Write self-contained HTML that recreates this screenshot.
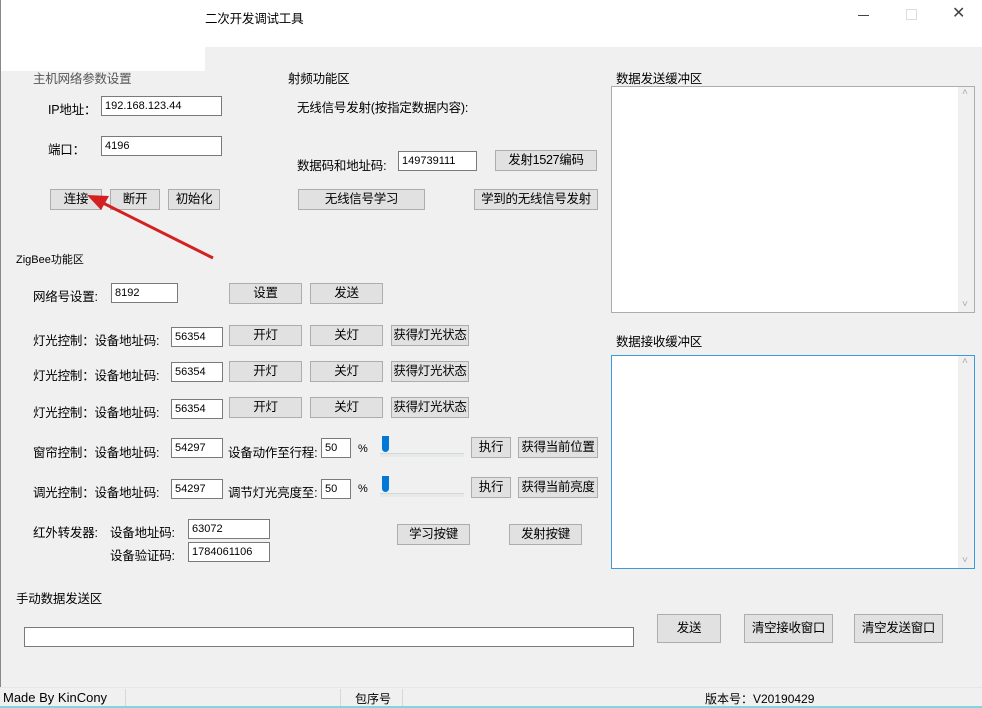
<!DOCTYPE html>
<html><head><meta charset="utf-8"><style>
*{box-sizing:border-box;margin:0;padding:0}
body{width:982px;height:708px;background:#f0f0f0;position:relative;overflow:hidden;font:12px "Liberation Sans","Noto Sans CJK SC",sans-serif;color:#000}
.a{position:absolute;white-space:nowrap}
.b{position:absolute;background:#e1e1e1;border:1px solid #adadad;text-align:center;font-size:12.5px;line-height:19px;height:21px;white-space:nowrap;overflow:hidden;letter-spacing:-0.3px}
.i{position:absolute;background:#fff;border:1px solid #7a7a7a;font-size:11px;padding-left:3px;line-height:18px;height:20px}
.t{font-size:12.5px;letter-spacing:-0.2px;margin-top:1px}
.ta{position:absolute;background:#fff;border:1px solid #abadb3}
.sb{position:absolute;right:0;top:0;bottom:0;width:16px;background:#f0f0f0}
.sb:before{content:"˄";position:absolute;top:0;left:4px;color:#aaa;font-size:10px}
.sb:after{content:"˅";position:absolute;bottom:2px;left:4px;color:#aaa;font-size:10px}
.sl{position:absolute;height:22px;width:84px}
.sl .tr{position:absolute;left:0;right:0;top:17px;height:4px;background:#e7eaea;border-top:1px solid #d6d6d6}
.sl .th{position:absolute;left:2px;top:0;width:7px;height:16px;background:#0078d7;border-radius:0 0 4px 4px}
</style></head><body>
<div class="a" style="left:0;top:0;width:982px;height:47px;background:#fff"></div>
<div class="a" style="left:0;top:47px;width:205px;height:24px;background:#fff"></div>
<div class="a" style="left:0;top:0;width:1px;height:708px;background:#888"></div>
<div class="a t" style="left:205px;top:7px">二次开发调试工具</div>
<div class="a" style="left:858px;top:15px;width:11px;height:1px;background:#444"></div>
<div class="a" style="left:906px;top:9px;width:11px;height:11px;border:1px solid #ddd"></div>
<div class="a" style="left:952px;top:3px;font-size:16px;color:#444">✕</div>

<div class="a t" style="left:33px;top:67px;color:#555">主机网络参数设置</div>
<div class="a t" style="left:48px;top:98px">IP地址：</div>
<div class="i" style="left:101px;top:96px;width:121px">192.168.123.44</div>
<div class="a t" style="left:48px;top:138px">端口：</div>
<div class="i" style="left:101px;top:136px;width:121px">4196</div>
<div class="b" style="left:50px;top:189px;width:52px">连接</div>
<div class="b" style="left:110px;top:189px;width:50px">断开</div>
<div class="b" style="left:168px;top:189px;width:52px">初始化</div>
<svg class="a" style="left:85px;top:190px" width="135" height="75"><line x1="128" y1="68" x2="12" y2="10" stroke="#d42020" stroke-width="3"/><polygon points="2,5 24,6 16,20" fill="#d42020"/></svg>

<div class="a t" style="left:288px;top:67px">射频功能区</div>
<div class="a t" style="left:297px;top:96px">无线信号发射(按指定数据内容):</div>
<div class="a t" style="left:297px;top:154px">数据码和地址码:</div>
<div class="i" style="left:398px;top:151px;width:79px">149739111</div>
<div class="b" style="left:495px;top:150px;width:102px">发射1527编码</div>
<div class="b" style="left:298px;top:189px;width:127px">无线信号学习</div>
<div class="b" style="left:474px;top:189px;width:124px">学到的无线信号发射</div>

<div class="a" style="left:16px;top:251px;font-size:11px">ZigBee功能区</div>
<div class="a t" style="left:33px;top:285px">网络号设置:</div>
<div class="i" style="left:111px;top:283px;width:67px">8192</div>
<div class="b" style="left:229px;top:283px;width:73px">设置</div>
<div class="b" style="left:310px;top:283px;width:73px">发送</div>

<div class="a t" style="left:33px;top:329px">灯光控制：设备地址码:</div>
<div class="i" style="left:171px;top:327px;width:52px">56354</div>
<div class="b" style="left:229px;top:325px;width:73px">开灯</div>
<div class="b" style="left:310px;top:325px;width:73px">关灯</div>
<div class="b" style="left:391px;top:325px;width:78px">获得灯光状态</div>
<div class="a t" style="left:33px;top:364px">灯光控制：设备地址码:</div>
<div class="i" style="left:171px;top:362px;width:52px">56354</div>
<div class="b" style="left:229px;top:361px;width:73px">开灯</div>
<div class="b" style="left:310px;top:361px;width:73px">关灯</div>
<div class="b" style="left:391px;top:361px;width:78px">获得灯光状态</div>
<div class="a t" style="left:33px;top:401px">灯光控制：设备地址码:</div>
<div class="i" style="left:171px;top:399px;width:52px">56354</div>
<div class="b" style="left:229px;top:397px;width:73px">开灯</div>
<div class="b" style="left:310px;top:397px;width:73px">关灯</div>
<div class="b" style="left:391px;top:397px;width:78px">获得灯光状态</div>

<div class="a t" style="left:33px;top:441px">窗帘控制：设备地址码:</div>
<div class="i" style="left:171px;top:438px;width:52px">54297</div>
<div class="a t" style="left:228px;top:441px">设备动作至行程:</div>
<div class="i" style="left:321px;top:438px;width:30px">50</div>
<div class="a" style="left:358px;top:443px;font-size:11px">%</div>
<div class="sl" style="left:380px;top:436px"><div class="tr"></div><div class="th"></div></div>
<div class="b" style="left:471px;top:437px;width:40px">执行</div>
<div class="b" style="left:518px;top:437px;width:80px">获得当前位置</div>

<div class="a t" style="left:33px;top:481px">调光控制：设备地址码:</div>
<div class="i" style="left:171px;top:479px;width:52px">54297</div>
<div class="a t" style="left:228px;top:481px">调节灯光亮度至:</div>
<div class="i" style="left:321px;top:479px;width:30px">50</div>
<div class="a" style="left:358px;top:483px;font-size:11px">%</div>
<div class="sl" style="left:380px;top:476px"><div class="tr"></div><div class="th"></div></div>
<div class="b" style="left:471px;top:477px;width:40px">执行</div>
<div class="b" style="left:518px;top:477px;width:80px">获得当前亮度</div>

<div class="a t" style="left:33px;top:521px">红外转发器:</div>
<div class="a t" style="left:110px;top:521px">设备地址码:</div>
<div class="i" style="left:188px;top:519px;width:82px">63072</div>
<div class="a t" style="left:110px;top:544px">设备验证码:</div>
<div class="i" style="left:188px;top:542px;width:82px">1784061106</div>
<div class="b" style="left:397px;top:524px;width:73px">学习按键</div>
<div class="b" style="left:509px;top:524px;width:73px">发射按键</div>

<div class="a t" style="left:16px;top:587px">手动数据发送区</div>
<div class="i" style="left:24px;top:627px;width:610px"></div>
<div class="b" style="left:657px;top:614px;width:64px;height:29px;line-height:27px">发送</div>
<div class="b" style="left:744px;top:614px;width:89px;height:29px;line-height:27px">清空接收窗口</div>
<div class="b" style="left:854px;top:614px;width:89px;height:29px;line-height:27px">清空发送窗口</div>

<div class="a t" style="left:616px;top:67px">数据发送缓冲区</div>
<div class="ta" style="left:611px;top:86px;width:364px;height:227px"><div class="sb"></div></div>
<div class="a t" style="left:616px;top:330px">数据接收缓冲区</div>
<div class="ta" style="left:611px;top:355px;width:364px;height:214px;border-color:#3c9ad8"><div class="sb"></div></div>

<div class="a" style="left:0;top:687px;width:982px;height:21px;background:#f0f0f0;border-top:1px solid #e6e6e6"></div>
<div class="a" style="left:3px;top:690px;font-size:13px">Made By KinCony</div>
<div class="a" style="left:125px;top:689px;width:1px;height:18px;background:#d8d8d8"></div>
<div class="a" style="left:340px;top:689px;width:1px;height:18px;background:#d8d8d8"></div>
<div class="a" style="left:355px;top:690px;font-size:12px">包序号</div>
<div class="a" style="left:402px;top:689px;width:1px;height:18px;background:#d8d8d8"></div>
<div class="a" style="left:705px;top:690px;font-size:12px">版本号：V20190429</div>
<div class="a" style="left:0;top:706px;width:982px;height:2px;background:#7fd6e0"></div>
</body></html>
